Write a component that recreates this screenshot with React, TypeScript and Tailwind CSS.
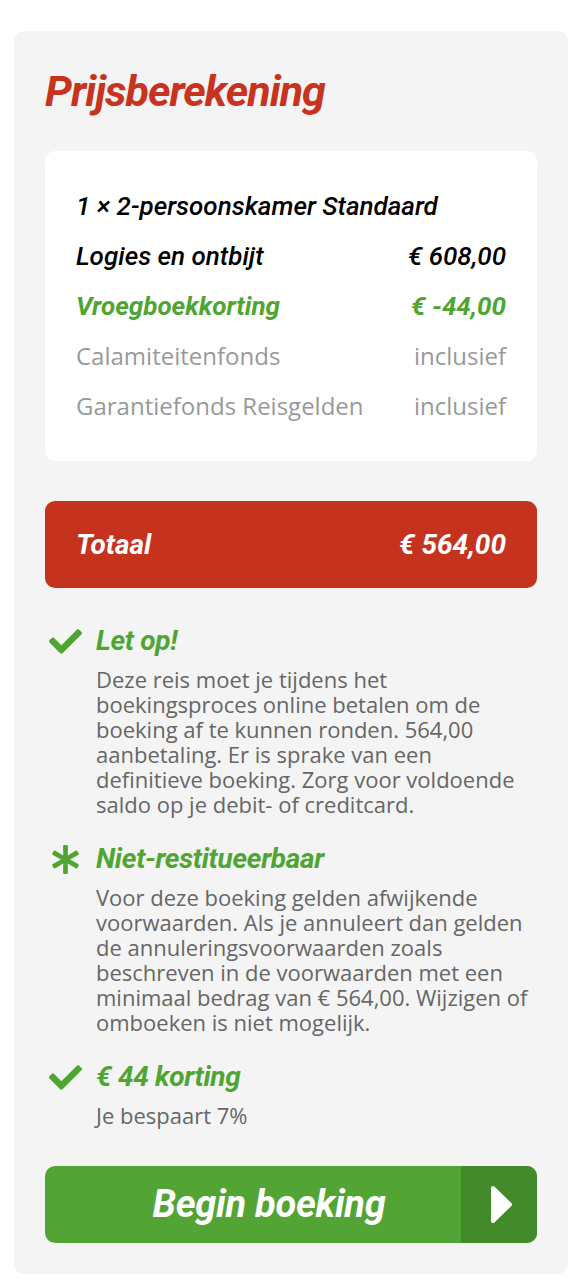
import React from 'react';
import { FaCheck, FaAsterisk } from 'react-icons/fa';

const green = 'text-[#4fa532]';

function Notice({ icon, title, children }: { icon: React.ReactNode; title: string; children: React.ReactNode }) {
  return (
    <div className="flex gap-[11px]">
      <div className="w-[40px] h-[32px] flex items-center justify-center shrink-0 text-[#4fa532]">{icon}</div>
      <div className="flex-1">
        <h3 className={`font-['Roboto'] italic font-bold text-[28px] leading-[32px] tracking-[-0.3px] ${green}`}>{title}</h3>
        <p className="font-['Open_Sans'] text-[22px] leading-[25px] text-[#666] mt-[10px]">{children}</p>
      </div>
    </div>
  );
}

export default function App() {
  return (
    <div className="bg-white min-h-screen pt-[31px] pl-[14px] pr-[20px] pb-3">
      <div className="bg-[#f4f4f4] rounded-[10px] px-[31px] pt-[38px] pb-[31px]">
        <h1 className="font-['Roboto'] italic font-bold text-[43px] leading-[44px] tracking-[-1px] text-[#c8331f]">Prijsberekening</h1>

        <div className="bg-white rounded-[10px] mt-[38px] px-[31px] pt-[30px] pb-[30px]">
          <div className="font-['Roboto'] italic font-medium text-[26px] leading-[50px] text-black">
            1 × 2-persoonskamer Standaard
          </div>
          <div className="flex justify-between font-['Roboto'] italic font-medium text-[26px] leading-[50px] text-black">
            <span>Logies en ontbijt</span>
            <span>€ 608,00</span>
          </div>
          <div className={`flex justify-between font-['Roboto'] italic font-bold text-[26px] leading-[50px] ${green}`}>
            <span>Vroegboekkorting</span>
            <span>€ -44,00</span>
          </div>
          <div className="flex justify-between font-['Open_Sans'] text-[24px] leading-[50px] text-[#999]">
            <span>Calamiteitenfonds</span>
            <span>inclusief</span>
          </div>
          <div className="flex justify-between font-['Open_Sans'] text-[24px] leading-[50px] text-[#999]">
            <span>Garantiefonds Reisgelden</span>
            <span>inclusief</span>
          </div>
        </div>

        <div className="bg-[#c5331f] rounded-[10px] mt-[40px] h-[87px] px-[31px] flex items-center justify-between font-['Roboto'] italic font-bold text-[28px] text-white">
          <span>Totaal</span>
          <span>€ 564,00</span>
        </div>

        <div className="mt-[37px] flex flex-col gap-[26px]">
          <Notice icon={<FaCheck size={33} />} title="Let op!">
            Deze reis moet je tijdens het boekingsproces online betalen om de boeking af te kunnen ronden. 564,00 aanbetaling. Er is sprake van een definitieve boeking. Zorg voor voldoende saldo op je debit- of creditcard.
          </Notice>
          <Notice icon={<FaAsterisk size={29} />} title="Niet-restitueerbaar">
            Voor deze boeking gelden afwijkende voorwaarden. Als je annuleert dan gelden de annuleringsvoorwaarden zoals beschreven in de voorwaarden met een minimaal bedrag van € 564,00. Wijzigen of omboeken is niet mogelijk.
          </Notice>
          <Notice icon={<FaCheck size={33} />} title="€ 44 korting">
            Je bespaart 7%
          </Notice>
        </div>

        <button className="mt-[38px] w-full h-[77px] rounded-[10px] overflow-hidden flex bg-[#52a535]">
          <span className="flex-1 flex items-center justify-center pl-[32px] font-['Roboto'] italic font-bold text-[38px] tracking-[-0.3px] text-white">
            Begin boeking
          </span>
          <span className="w-[76px] h-full bg-[#438a2b] flex items-center justify-center pl-[4px]">
            <svg width="23" height="39" viewBox="0 0 23 39">
              <path d="M3 3 L20 19.5 L3 36 Z" fill="white" stroke="white" strokeWidth="4" strokeLinejoin="round" />
            </svg>
          </span>
        </button>
      </div>
    </div>
  );
}
